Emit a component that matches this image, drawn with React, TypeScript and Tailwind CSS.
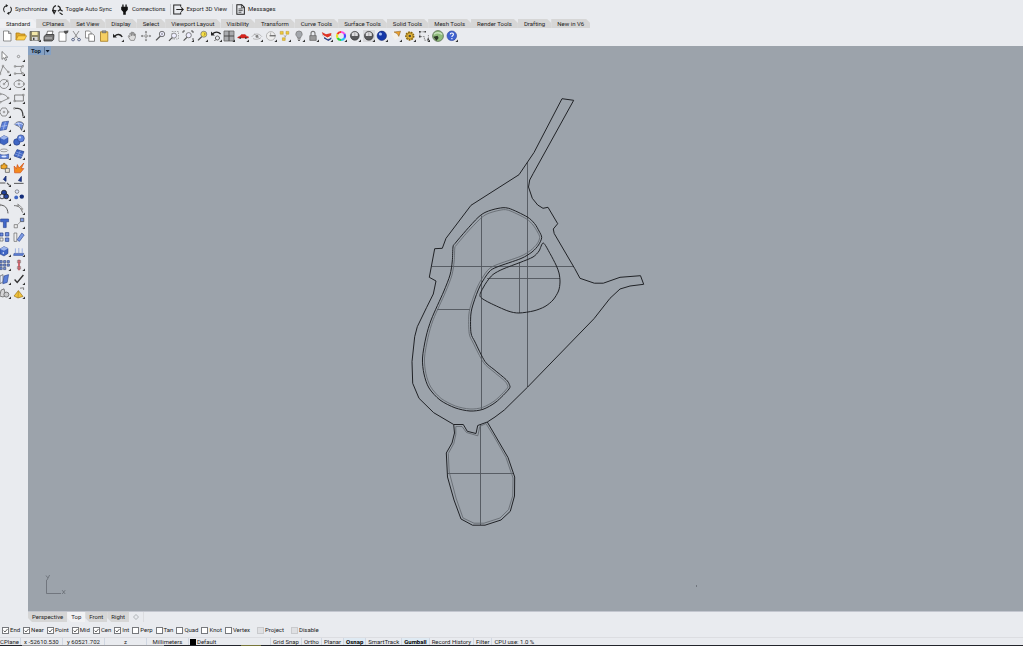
import { useState } from "react";
import type { ReactNode } from "react";

type IconDef = { name: string; art: ReactNode; more?: boolean };

const K = "#222222";
const G = "#8a8d92";
const B = "#3f66c4";
const L = "#9db4ea";

function Icon({ art, more, className = "size-3" }: { art: ReactNode; more?: boolean; className?: string }) {
  return (
    <svg viewBox="0 0 12 12" className={className} fill="none" stroke={K} strokeWidth={0.8} aria-hidden="true">
      {art}
      {more && <path d="M12 9.4V12H9.4Z" fill="#333" stroke="none" />}
    </svg>
  );
}

const lens = <path d="M7.2 5.2 2 10.4" strokeWidth={1.3} stroke="#555" />;

const toolbar: IconDef[] = [
  { name: "New", art: <path d="M2.5 1H7.5L10 3.5V11H2.5ZM7.5 1V3.5H10" fill="#fff" stroke="#666" strokeWidth={0.7} /> },
  { name: "Open", art: <><path d="M1 10V3H4.5L5.5 4H10V6" fill="#e0a92c" stroke="#b07c14" /><path d="M1 10 3.2 5.8H11.6L9.4 10Z" fill="#ffd24d" stroke="#b07c14" strokeWidth={0.6} /></> },
  { name: "Save", more: true, art: <><path d="M1 1.5H10.5V10.5H1Z" fill="#8d8768" stroke="#555" strokeWidth={0.7} /><path d="M3 1.8H8.6V5H3Z" fill="#f2e7a8" stroke="none" /><path d="M3 7H8.6V10.4H3Z" fill="#d8d8d8" stroke="none" /><path d="M4 7.8H5.5V10H4Z" fill="#444" stroke="none" /></> },
  { name: "Print", art: <><path d="M3.5 5 4.5 1.2H10L9 5Z" fill="#fff" stroke="#444" strokeWidth={0.7} /><path d="M1 6.5 3 4.6H11L10.6 9.6 9 11H1Z" fill="#777" stroke="#222" strokeWidth={0.7} /><path d="M1.8 8H9" stroke="#ddd" /></> },
  { name: "Document properties", art: <><path d="M2 2H9V11.3H2Z" fill="#fff" stroke="#666" strokeWidth={0.7} /><path d="M7 1.2 11.2.8 10.4 3 8 3.4Z" fill="#555" stroke="#333" strokeWidth={0.5} /></> },
  { name: "Cut", art: <><path d="M3 1 8 8.5M9 1 4 8.5" stroke="#777" /><path d="M3 8.3a1.3 1.3 0 1 0 .1 0ZM9 8.3a1.3 1.3 0 1 0 .1 0Z" stroke="#3c4a70" strokeWidth={0.9} /></> },
  { name: "Copy", art: <><path d="M1.5 1H5.5L7 2.5V8H1.5Z" fill="#fff" stroke="#666" strokeWidth={0.7} /><path d="M4.8 4H8.8L10.5 5.7V11.3H4.8Z" fill="#fff" stroke="#555" strokeWidth={0.7} /></> },
  { name: "Paste", art: <><path d="M2.5 1.8H9.8V11.3H2.5Z" fill="#f6cf62" stroke="#a47a20" strokeWidth={0.8} /><path d="M4.2.8H8V2.8H4.2Z" fill="#999" stroke="#555" strokeWidth={0.5} /></> },
  { name: "Undo", more: true, art: <><path d="M3 6C5 3.8 8.5 4 10.2 7" strokeWidth={1.4} /><path d="M1 3.8V7.6H4.9Z" fill={K} stroke="none" /></> },
  { name: "Pan", art: <path d="M3.8 6.8 2.6 5.6 2.3 6.8 4.6 10.4H8.2L9.4 7.5V4L8.5 3.8V5.8L7.9 2.5H7.1V5.6L6.4 2H5.5V5.8L4.7 3 3.9 3.2Z" fill="#ddd" stroke="#777" strokeWidth={0.7} /> },
  { name: "Rotate view", art: <><path d="M6 1.4V10.6M1.4 6H10.6" stroke="#999" strokeDasharray="3 1.2" /><path d="M6 .8 7.2 2.6H4.8ZM6 11.2 7.2 9.4H4.8ZM.8 6 2.6 4.8V7.2ZM11.2 6 9.4 4.8V7.2Z" fill="#666" stroke="none" /><path d="M4.6 6a1.4 1.4 0 1 0 2.8 0 1.4 1.4 0 1 0-2.8 0" stroke="#888" strokeWidth={0.6} /></> },
  { name: "Zoom dynamic", art: <>{lens}<circle cx="8" cy="4" r="2.7" fill="#eef" stroke="#555" /><path d="M8 2.8V5.2" strokeWidth={0.6} /></> },
  { name: "Zoom window", art: <><path d="M4 1.5H10.5V9H4Z" stroke="#999" strokeDasharray="1.5 1" /><path d="M4.6 7.2 1 10.8" stroke="#555" strokeWidth={1.2} /><circle cx="6" cy="5.6" r="2.5" fill="#eef" stroke="#777" /></> },
  { name: "Zoom extents", more: true, art: <><path d="M5.4 6.8 1.6 10.6" stroke="#555" strokeWidth={1.2} /><circle cx="6.7" cy="5.2" r="2.6" fill="#eef" stroke="#666" /><path d="M1 3V1H3M9 1H11V3M11 8V10" stroke="#333" /></> },
  { name: "Zoom selected", more: true, art: <>{lens}<circle cx="7.8" cy="4.2" r="3" fill="#f5df48" stroke="#777" /><path d="M8 2.6 9.2 4 8 5.6" stroke="#9a7b10" /></> },
  { name: "Undo view", more: true, art: <><path d="M2.4 4C4.8 1.4 8.4 1.6 10.6 4" strokeWidth={1.2} /><path d="M1 1.6V5.6H4.8Z" fill={K} stroke="none" /><path d="M7.4 6a2 2 0 1 0 .1 0M6 9.4 4.4 11" stroke="#555" strokeWidth={1} /></> },
  { name: "Four viewports", more: true, art: <><path d="M1 1H11V11H1Z" fill="#a9abae" stroke="#666" /><path d="M6 1V11M1 6H11" stroke="#444" strokeWidth={0.9} /></> },
  { name: "Set view", more: true, art: <><path d="M.8 7.2 3.2 6 4.4 4.6H8.2L9.6 6.2 11.4 6.7V8H.8Z" fill="#d8231c" stroke="#b01c16" strokeWidth={0.4} /><path d="M2.4 8h1.6M8 8h1.6" stroke="#333" strokeWidth={1.3} /></> },
  { name: "Named views", more: true, art: <><path d="M.8 6.8C3.2 3.2 8.2 3 11 6.8M2 8.6C4.4 9.8 8 9.4 10 7.6" stroke="#aaa" /><circle cx="6" cy="6.4" r="1.4" fill="#777" stroke="none" /><path d="M3 3.6 9 9" stroke="#999" strokeWidth={0.6} /></> },
  { name: "Set CPlane", more: true, art: <><circle cx="5.8" cy="6" r="4.4" fill="#eee" stroke="#aaa" /><path d="M4.6 5.8H10.6" stroke="#444" strokeWidth={1} /><path d="M5.6 2.6V5" stroke="#aaa" /></> },
  { name: "Object snap", more: true, art: <><path d="M1.2 1.4H4.2V4.2H1.2ZM7 1.4H9.8V4.2H7ZM3.4 7.8H6.2V10.4H3.4Z" fill="#edc93c" stroke="#bb9320" strokeWidth={0.5} /><path d="M4.6 5 7 7.4M7.4 5 5.8 7" stroke="#888" strokeWidth={0.6} /></> },
  { name: "Lights", more: true, art: <><path d="M2.8 4.2a3.2 3.2 0 1 1 6.4 0C9.2 6 7.6 6.4 7.5 8H4.6C4.5 6.4 2.8 6 2.8 4.2Z" fill="#a3a7ac" stroke="#777" strokeWidth={0.7} /><path d="M4.6 9H7.5M5 10.5H7" stroke="#444" /></> },
  { name: "Lock", more: true, art: <><path d="M4 6V3.4a2 2 0 0 1 4 0V6" stroke="#777" strokeWidth={1.1} /><path d="M2.8 5.6H9.2V10.4H2.8Z" fill="#999" stroke="#666" strokeWidth={0.7} /></> },
  { name: "Layers", more: true, art: <><path d="M3 8.6 7.4 11 10.4 9V7.4L7.4 9.2 3 7Z" fill="#2b3f86" stroke="none" /><path d="M1.6 5.6 6.8 9 10.6 6.8V5L6.8 7 1.6 3.6Z" fill="#fff" stroke="#999" strokeWidth={0.4} /><path d="M.8 2 5 4.2 10.4 3 10 5.6 6.6 7.4 2 5Z" fill="#de3527" stroke="none" /></> },
  { name: "Properties", more: true, art: <g strokeWidth={2.2}><path d="M6 2A4 4 0 0 1 9.5 4" stroke="#ff4be0" /><path d="M9.5 4A4 4 0 0 1 9.5 8" stroke="#4a4dff" /><path d="M9.5 8A4 4 0 0 1 6 10" stroke="#22c8f0" /><path d="M6 10A4 4 0 0 1 2.5 8" stroke="#27d83c" /><path d="M2.5 8A4 4 0 0 1 2.5 4" stroke="#e9e326" /><path d="M2.5 4A4 4 0 0 1 6 2" stroke="#f63a2b" /></g> },
  { name: "Shade", more: true, art: <><circle cx="5.8" cy="5.8" r="4.4" fill="#58595b" stroke="#333" strokeWidth={0.6} /><path d="M2.8 3.6C4.4 1.6 7.4 1.6 8.8 3.6V6H2.8Z" fill="#dedee0" stroke="none" /><path d="M5.8 1.6V6" stroke="#888" strokeWidth={0.6} /></> },
  { name: "Render preview", more: true, art: <><path d="M0 0H12V12H0Z" fill="#d8d9dc" stroke="none" /><circle cx="5.8" cy="5.8" r="4.4" fill="#58595b" stroke="#333" strokeWidth={0.6} /><path d="M2.8 3.6C4.4 1.6 7.4 1.6 8.8 3.6V6H2.8Z" fill="#dedee0" stroke="none" /><path d="M5.8 1.6V6" stroke="#888" strokeWidth={0.6} /></> },
  { name: "Render", more: true, art: <><circle cx="5.8" cy="5.8" r="4.7" fill="#1437a8" stroke="#0c1d60" strokeWidth={0.5} /><circle cx="4.4" cy="4" r="1.6" fill="#a9c1f5" stroke="none" /></> },
  { name: "Spotlight", more: true, art: <><path d="M1.4 4 5 .8 10 7 5 10Z" fill="#f4f1ea" stroke="none" /><path d="M4 2 10.6 1.2 8.8 6.4 7.4 3.8Z" fill="#eda02b" stroke="#845a1c" strokeWidth={0.5} /></> },
  { name: "Options", more: true, art: <><circle cx="5.8" cy="6" r="3.9" fill="#ebc74a" stroke="#886414" strokeWidth={1.6} strokeDasharray="1.7 1" /><circle cx="5.8" cy="6" r="3" fill="#e8b93b" stroke="#7b5a12" strokeWidth={0.5} /><circle cx="5.8" cy="6" r="1.3" fill="#4d4a41" stroke="none" /></> },
  { name: "Dimension", more: true, art: <><path d="M1.8 1.8V6.6H6.4V10.2H10.4V5M1.8 1.8H7" stroke="#777" strokeDasharray="1.8 .8" /><path d="M1 1H2.6V2.6H1ZM6.4 1H8V2.6H6.4ZM1 5.8H2.6V7.4H1ZM9.4 8.6H11V10.2H9.4Z" fill="#444" stroke="none" /></> },
  { name: "Grasshopper", art: <><circle cx="6" cy="6" r="5.4" fill="#8fbb7c" stroke="#5a6e52" strokeWidth={0.8} /><path d="M2 4.4C4 2 8 2.4 10.2 4.6" stroke="#c9e2be" strokeWidth={1.4} /><path d="M1.4 6.8 5.6 5.8 6.6 8 4.4 10.8Z" fill="#2b3627" stroke="none" /></> },
  { name: "Help", more: true, art: <><circle cx="5.8" cy="5.8" r="4.8" fill="#3f62d0" stroke="#2a3f94" strokeWidth={0.6} /><path d="M4.2 4.4C4.4 2.4 7.6 2.6 7.4 4.6 7.2 5.8 5.9 5.6 5.9 7M5.9 8V9.2" stroke="#fff" strokeWidth={1.1} /></> },
];

const pt = (x: number, y: number) => <path d={`M${x - 0.7} ${y - 0.7}h1.4v1.4h-1.4Z`} fill="#fff" stroke="#555" strokeWidth={0.5} />;
const cube = (x: number) => <><path d={`M${x} 4 ${x + 4} 1.6 ${x + 8} 3.4V8.4L${x + 4} 11 ${x} 9Z`} fill={B} stroke="#20387e" strokeWidth={0.5} /><path d={`M${x} 4 ${x + 4} 1.6 ${x + 8} 3.4 ${x + 4} 5.8Z`} fill={L} stroke="none" /></>;

const sidebar: IconDef[] = [
  { name: "Select", art: <path d="M3 1.5V9.4L5 7.6 6.4 10.6 7.6 10 6.3 7.2H8.8Z" fill="#fff" stroke="#555" strokeWidth={0.7} /> },
  { name: "Point", more: true, art: <circle cx="5.5" cy="6.5" r="1.2" stroke="#777" strokeWidth={0.7} /> },
  { name: "Polyline", more: true, art: <><path d="M1 10 4 2 9.6 8.4" stroke="#777" />{pt(4, 2)}{pt(9.4, 8)}{pt(1, 10)}</> },
  { name: "Curve", more: true, art: <><path d="M2 2.4H9.8C6.4 5 7.6 7.4 9.8 9.6H2" stroke="#777" />{pt(2, 2.4)}{pt(9.8, 2.2)}{pt(9.6, 9.4)}{pt(2, 9.6)}</> },
  { name: "Circle", more: true, art: <><circle cx="5" cy="6" r="4.5" stroke="#777" /><path d="M5 6 8 3" stroke="#777" />{pt(5, 6)}{pt(8.2, 2.8)}</> },
  { name: "Ellipse", more: true, art: <><ellipse cx="6" cy="6" rx="5" ry="3.6" stroke="#777" />{pt(6, 6)}{pt(6, 2.4)}{pt(11, 6)}</> },
  { name: "Arc", more: true, art: <><path d="M1 2C5 1.6 8 4 9.4 6.4L1 10.4" stroke="#777" />{pt(1.2, 2)}{pt(9.2, 6)}{pt(1.2, 10.2)}</> },
  { name: "Rectangle", more: true, art: <><path d="M1.6 3H10.4V9H1.6Z" stroke="#666" />{pt(1.6, 9)}{pt(10.4, 3)}</> },
  { name: "Polygon", more: true, art: <><path d="M3 2H7L9.4 6 7 10H3L.6 6Z" stroke="#777" />{pt(5, 6)}{pt(9.2, 6)}</> },
  { name: "Fillet curves", more: true, art: <><path d="M1.2 2.4H5C8.6 2.6 10 5 10 10.6" stroke="#444" strokeWidth={1.2} />{pt(1.4, 2.4)}</> },
  { name: "Surface", more: true, art: <><path d="M3.4 2 9.6 1.2 7.4 9.4 1 10.4Z" fill="#5b7fd8" stroke="#2a438c" strokeWidth={0.6} /><path d="M2.4 6.4 8.4 5.4M6.4 1.8 4.2 9.8" stroke="#c3d2f5" strokeWidth={0.6} /></> },
  { name: "Surface from edges", more: true, art: <><path d="M1.4 4.4C4 .6 9 1 10.6 4L8.6 10.4 6.6 6.8Z" fill="#6f8fe0" stroke="#444" strokeWidth={0.6} /><path d="M1.4 4.4C4 2.6 8 3 10 4.6M5 2.4 6.6 6.8" stroke="#dce5fb" /></> },
  { name: "Box", more: true, art: cube(1) },
  { name: "Boolean union", more: true, art: <><circle cx="3.8" cy="8" r="3.2" fill={B} stroke="#20387e" strokeWidth={0.6} /><circle cx="7.8" cy="4.4" r="3.5" fill="#5f84df" stroke="#20387e" strokeWidth={0.6} /><circle cx="7" cy="3.4" r="1.1" fill="#c6d5fa" stroke="none" /></> },
  { name: "Project curve", more: true, art: <><ellipse cx="5" cy="2.4" rx="3.8" ry="1.4" stroke="#888" /><path d="M.6 6C3 7.4 7 7.4 9.6 6V10.4H.6Z" fill="#5b7fd8" stroke="#2a438c" strokeWidth={0.6} /><ellipse cx="5" cy="8.4" rx="2.6" ry="1" fill="#dfe8ff" stroke="none" /></> },
  { name: "Mesh", more: true, art: <><path d="M4 1.6 11 3.6 8 10.4 1 8Z" fill={B} stroke="#223a80" strokeWidth={0.6} /><path d="M3 4 10 6.4M2 6 9 8.6M7.4 2.6 4.6 9.2" stroke="#9db4ea" strokeWidth={0.6} /></> },
  { name: "Join", art: <><path d="M2 3H4L4.4 1.4H6L6.2 3H8V6L6 7 2 6.4Z" fill="#f0a92d" stroke="#7c5410" strokeWidth={0.7} /><path d="M6.4 6.4H10.4V10.4H6.4Z" fill="#e9e2d2" stroke="#555" strokeWidth={0.7} /></> },
  { name: "Explode", art: <path d="M1.6 10.8 1.2 4 3.4 6.8 4.4 2.6 6 6 10.8 1 8.2 6.6 10.8 6.6 7.4 10.8Z" fill="#f28a1e" stroke="#d2501a" strokeWidth={0.7} /> },
  { name: "Trim", more: true, art: <><path d="M7 1V6.4L4.4 4.4Z" fill="#1a3a9a" stroke="#1a2b66" /><path d="M0 8H6.4M8 8 10.6 10.4" stroke="#555" strokeWidth={1.1} /></> },
  { name: "Split", art: <><path d="M8.4 1.4V6.6L5.4 5.6Z" fill="#1a3a9a" stroke="#1a2b66" strokeWidth={0.7} /><path d="M1 8.4H10.6" stroke="#666" strokeWidth={1.1} /></> },
  { name: "Group", more: true, art: <><circle cx="5" cy="3.8" r="2.6" fill="#1f4099" stroke="#222" /><circle cx="3" cy="7.4" r="2.4" fill="#dce4f8" stroke="#222" /><circle cx="7.2" cy="7.4" r="2.4" fill="#25439b" stroke="#222" /></> },
  { name: "Ungroup", art: <><circle cx="4" cy="2.6" r="1.8" fill="#dce4f8" stroke="#555" strokeWidth={0.6} /><circle cx="3.2" cy="8.4" r="1.9" fill={B} stroke="none" /><circle cx="8.8" cy="7.6" r="2.2" fill="#142d7a" stroke="none" /></> },
  { name: "Extend", art: <><path d="M.6 2C6 2 8.6 5 9 10.4" stroke="#555" strokeWidth={1} />{pt(1, 2)}</> },
  { name: "Offset", more: true, art: <><path d="M1 2.6C6 2.6 8 5 9.6 9.6" stroke="#555" /><path d="M4.6 1 8.8 4.4" stroke="#888" />{pt(5, 2.6)}{pt(9, 6)}</> },
  { name: "Text", art: <path d="M1.6 2H9.6V4.8H7.2V10.6H4.4V4.8H1.6Z" fill="#4269cb" stroke="#223b86" strokeWidth={0.6} /> },
  { name: "Move", more: true, art: <><path d="M3.4 8.8 9 3.2" stroke="#666" strokeDasharray="1.4 .8" /><path d="M1.2 7.6H4.4V10.8H1.2Z" fill="#eee" stroke="#555" strokeWidth={0.6} /><path d="M7.4 1.2H10.8V4.6H7.4Z" fill="#7d9be4" stroke="#333" strokeWidth={0.6} /></> },
  { name: "Copy objects", art: <><path d="M1 2H4V5H1ZM6.4 1.6H9.8V5H6.4ZM6.4 7H9.8V10.4H6.4Z" fill="#6f8fe0" stroke="#2a438c" strokeWidth={0.7} /><path d="M1 7H4V10H1Z" fill="#eee" stroke="#666" strokeWidth={0.7} /></> },
  { name: "Rotate", art: <><path d="M1 2H3.8V10.4H1Z" fill="#eee" stroke="#555" strokeWidth={0.6} /><path d="M4.2 8.8 8.8 2 11.2 4 6.4 10.4Z" fill="#7d9be4" stroke="#2a438c" strokeWidth={0.6} /></> },
  { name: "Solid cube", more: true, art: <>{cube(1)}<path d="M3 8 5 9V7Z" fill="#dfe8ff" stroke="none" /></> },
  { name: "Extrude", more: true, art: <><path d="M1 8.4H10.8L9.8 10.4H.6Z" fill="#5b7fd8" stroke="#2a438c" strokeWidth={0.5} /><path d="M2.4 8V3.4M5.8 8V3M9.2 8V3.4" stroke="#8aa2dd" /></> },
  { name: "Array", more: true, art: <path d="M1 1.6H3.2V3.8H1ZM4.6 1.6H6.8V3.8H4.6ZM8.2 1.6H10.4V3.8H8.2ZM1 5H3.2V7.2H1ZM4.6 5H6.8V7.2H4.6ZM8.2 5H10.4V7.2H8.2ZM1 8.4H3.2V10.6H1ZM4.6 8.4H6.8V10.6H4.6Z" fill="#6f8fe0" stroke="#333f66" strokeWidth={0.6} /> },
  { name: "Align", more: true, art: <><path d="M6 .8V11.2" stroke="#c9202a" strokeWidth={1.3} /><path d="M4.4 1.4H7.6V3.8H4.4ZM4.4 7.6H7.6V10H4.4Z" stroke="#8d6a6c" strokeWidth={0.7} /></> },
  { name: "Boundary", more: true, art: <><path d="M1 3 4 1.6V9L1 10.6Z" fill="#e5ebfa" stroke="#444" strokeWidth={0.6} /><path d="M5 3 9.6 1.6 8.2 9.4 3.8 10.8Z" fill="#5b7fd8" stroke="#2a438c" strokeWidth={0.6} /></> },
  { name: "Check", more: true, art: <path d="M1.6 6.6 4.2 9.4 10.4 2" stroke="#333" strokeWidth={1.4} /> },
  { name: "Hide", more: true, art: <><path d="M.8 9 2 3.2 5 1.8 6.6 8.4 4 10Z" fill="#d6d6d8" stroke="#555" strokeWidth={0.7} /><circle cx="7.4" cy="7.6" r="2.5" fill="#c9cacc" stroke="#555" strokeWidth={0.7} /></> },
  { name: "Pyramid", more: true, art: <><path d="M5.4 3.6 10 9.4 5 11 1 9Z" fill="#f1c33c" stroke="#8b6718" strokeWidth={0.6} /><path d="M5.4 3.6 5 11" stroke="#9b7420" strokeWidth={0.5} /><path d="M7 1.2 10.6.8V3" stroke="#666" /></> },
];

const syncArt = <g strokeWidth={1.1}><path d="M4.8 1.8A4.3 4.3 0 0 0 2.8 8.8M7.2 10.2A4.3 4.3 0 0 0 9.2 3.2" /><path d="M4.2 0 6.8 1.8 4.2 3.6ZM7.8 8.4 5.2 10.2 7.8 12Z" fill={K} stroke="none" /></g>;

const ribbon: IconDef[] = [
  { name: "Synchronize", art: syncArt },
  { name: "Toggle Auto Sync", art: <g strokeWidth={1.3}><path d="M4.4 1.8A4 4 0 0 0 2.2 8.4M6.2 2C8.4 2.8 9.4 4.6 9 6.6" /><path d="M.6 7 4 7.4 2.4 10.4ZM6.4 8 9 6 11.6 8M8.2 9.4 11.6 11.8" /></g> },
  { name: "Connections", art: <path d="M3.6.6H5V3H7V.6H8.4V3H9.6V6.4L7.4 8.6V11.8H4.6V8.6L2.4 6.4V3H3.6Z" fill="#111" stroke="none" /> },
  { name: "Export 3D View", art: <g strokeWidth={1.1}><path d="M8.4 3V1.2H.8V10.8H8.4V9M3.6 6H10.8M8.8 3.6 11.2 6 8.8 8.4" /></g> },
  { name: "Messages", art: <><path d="M2 .8H7.4L10.2 3.6V11.2H2Z" strokeWidth={1.1} /><path d="M7 .8V4H10.2M3.8 5.4H8.4M3.8 7.2H8.4M3.8 9H7" /></> },
];

const tabs = ["Standard", "CPlanes", "Set View", "Display", "Select", "Viewport Layout", "Visibility", "Transform", "Curve Tools", "Surface Tools", "Solid Tools", "Mesh Tools", "Render Tools", "Drafting", "New in V6"];

const snaps: [string, boolean][] = [["End", true], ["Near", true], ["Point", true], ["Mid", true], ["Cen", true], ["Int", true], ["Perp", false], ["Tan", false], ["Quad", false], ["Knot", false], ["Vertex", false]];

function Snap({ label, initial, muted }: { label: string; initial: boolean; muted?: boolean }) {
  const [on, setOn] = useState(initial);
  return (
    <label className={`flex items-center gap-px ${muted ? "pl-1" : ""}`}>
      <span className="grid size-[7px]">
        <input
          type="checkbox"
          checked={on}
          disabled={muted}
          onChange={() => setOn(!on)}
          className="col-start-1 row-start-1 size-[7px] appearance-none border border-[#77797d] bg-white disabled:border-[#c9cacd] disabled:bg-[#dfe0e3]"
        />
        {on && (
          <svg viewBox="0 0 7 7" className="pointer-events-none col-start-1 row-start-1 size-[7px]" fill="none" stroke="#222" strokeWidth={0.7} aria-hidden="true">
            <path d="M1.6 3.6 3 5 5.5 2" />
          </svg>
        )}
      </span>
      {label}
    </label>
  );
}

/* Closed Catmull-Rom spline through "x y x y ..." points. */
function spline(coords: string) {
  const n = coords.split(" ").map(Number);
  const p: [number, number][] = [];
  for (let i = 0; i < n.length; i += 2) p.push([n[i], n[i + 1]]);
  const at = (i: number) => p[(i + p.length) % p.length];
  let d = `M${p[0][0]} ${p[0][1]}`;
  for (let i = 0; i < p.length; i++) {
    const [a, b, c, e] = [at(i - 1), at(i), at(i + 1), at(i + 2)];
    d += `C${b[0] + (c[0] - a[0]) / 7} ${b[1] + (c[1] - a[1]) / 7} ${c[0] - (e[0] - b[0]) / 7} ${c[1] - (e[1] - b[1]) / 7} ${c[0]} ${c[1]}`;
  }
  return d + "Z";
}

const lakeOuter = spline("453 247 455 243.5 466 230.5 478 217.5 486 212 498 208.4 508.7 208.3 527 216.8 534.5 223.5 539 231 541.7 237.5 538.5 245 532 252 521 258.5 497 267 489 272 480 286 473.5 303 470.8 315 471 333 475 342 485 361.5 494 369.5 506 379.5 509.3 384.5 509 389 496 402 483 409.3 470 411 455 407.8 440 400 429 388 424 374 422.5 358 426 337 431.5 319 443.5 292 450 275 452.3 261");
const lakeInner = spline("454.8 248 456.5 245 467.5 232 479.5 219.5 487 214 499 210.4 508.3 210.2 526 218.6 533 225 537.5 232 539.7 237.5 537 244 530.5 250.5 520 256.5 496 265 487.5 270.5 478.3 285 471.8 302 468.8 315 469.2 333.5 473.2 343 483.5 362.5 493 371.2 504.5 380.7 507.3 385 507 388.5 495 400.5 482.5 407.4 470 409 455.5 406 441.2 398.5 430.8 387 425.9 373.5 424.5 358 428 337.5 433.3 319.5 445.2 292.8 451.8 275.5 454.2 261");
const island = spline("543.3 243 550 253.5 556 265 559 273 560 282 558.5 291 553 300 545 306.5 534 310.8 519 313 508 311 490 303 481.5 298 480 294.5 483 288 487 281.5 493 274.5 503 269 520 262.5 533 257 539 251");

function Drawing() {
  return (
    <svg viewBox="28 46 995 565" className="block size-full" fill="none" role="img" aria-label="Site plan, top view">
      <path d="M527.5 162V387M481.5 215.5V409M432 266.5H573M487 278.5H560M519.5 262V313M437 309.5H470M480.5 424.5V525M447.5 473.5H513" stroke="#50555b" strokeWidth={0.9} />
      <g stroke="#5f656b" strokeWidth={0.8} strokeLinejoin="round">
        <path d={lakeInner} />
        <path d="M455.8 426.5V434.5L453.8 443.5 448.3 453.5 449.2 472 456 498 463 518 474 523.2 484 523.2 500 518 508.5 509.7 512.7 496 513 478 506 457.5 494 436.5 486 423.5 479.8 426.5 477.8 435.8 466.5 432.5 462 426.5Z" />
      </g>
      <g stroke="#202226" strokeWidth={1} strokeLinejoin="round">
        <path d="M562 98.7 573.7 100.3 533.3 173.3 529.7 180 528.5 187 532.3 198.3 537.7 205 543 208.3 548 207.3 557.7 223.7 553.3 229 554.2 233.5 574.7 268.5 580 278.3 594.3 283.2 603.3 283.2 620 277.3 640.5 275.7 643.7 284.3 630 286 620 289 610 298.3 594 318.7 527.7 387 504.3 410 495 417 487.3 422 477.7 425.5 476 433.5 467.3 431.3 463.3 424.5H453.7L433.7 412.7 419 398.3 412.7 383.3 412 361.7 414.7 336.7 417.3 326.7 426.7 307.3 433.3 294 436 281 429.3 277.3 434.7 248.7 442.3 248.3 446 238.3 471 205.3 519 174.7 534 152.5Z" />
        <path d={lakeOuter} />
        <path d={island} />
        <path d="M453.7 424.5 454.5 433 452 443 446.3 453 447.5 477 454 500 461 519 472.5 525.2 485 525.2 501 520 510.3 511.3 514.5 496 514.7 477 508 457.5 487.3 422" />
      </g>
      <g stroke="#666b72" strokeWidth={0.8}>
        <path d="M46.5 580V593.5H61M46 575.5 47.7 577.8M49.6 575 47 580M62.2 590.2 65.2 594M65.2 590.2 62.2 594" />
        <path d="M696.5 585V587" />
      </g>
    </svg>
  );
}

const statusModes: [string, boolean][] = [["Grid Snap", false], ["Ortho", false], ["Planar", false], ["Osnap", true], ["SmartTrack", false], ["Gumball", true], ["Record History", false], ["Filter", false]];

export default function App() {
  const [tab, setTab] = useState("Standard");
  const [view, setView] = useState("Top");
  return (
    <div className="flex h-screen flex-col overflow-hidden bg-[#e9ebef] font-[Roboto,sans-serif] text-[6px] leading-[8px] whitespace-nowrap text-[#1c1c1c]">
      <header className="flex h-[18px] shrink-0 items-center pl-[2px]">
        {ribbon.map((r, i) => (
          <button
            key={r.name}
            className={`flex items-center gap-[2px] pr-[5px] ${i > 2 ? "border-l border-[#c6c8cc] pl-[2px]" : ""} ${i === 2 ? "pl-[2px]" : ""}`}
          >
            <Icon art={r.art} className="size-[11px]" />
            {r.name}
          </button>
        ))}
      </header>

      <nav className="flex h-[10px] shrink-0 items-end">
        {tabs.map((t) => (
          <button
            key={t}
            onClick={() => setTab(t)}
            className={`h-[9px] px-[6px] [clip-path:polygon(0_0,calc(100%-4px)_0,100%_4px,100%_100%,0_100%)] ${t === tab ? "bg-[#eff0f3]" : "bg-[#d6d6d6]"}`}
          >
            {t}
          </button>
        ))}
      </nav>

      <div className="grid h-[18px] w-[459px] shrink-0 grid-cols-33 items-start pt-[2px]">
        {toolbar.map((t) => (
          <button key={t.name} aria-label={t.name} className="flex justify-center">
            <Icon art={t.art} more={t.more} />
          </button>
        ))}
      </div>

      <main className="flex min-h-0 flex-1">
        <aside className="w-7 shrink-0 border-t border-[#d5dde8] pt-[2px]">
          <div className="-ml-[2px] grid h-[251px] w-7 grid-cols-2 grid-rows-18 items-center">
            {sidebar.map((t) => (
              <button key={t.name} aria-label={t.name} className="flex justify-center">
                <Icon art={t.art} more={t.more} />
              </button>
            ))}
          </div>
        </aside>
        <section className="relative min-w-0 flex-1 border-b border-[#c3c6cf] bg-[#9ca3ab]">
          <Drawing />
          <button className="absolute top-0 left-0 flex h-[9px] items-center gap-[3px] bg-[#86a1c3] pr-px pl-[3px] font-bold text-[#0d1a2c]">
            Top
            <svg viewBox="0 0 6 8" className="h-2 w-[6px]" aria-hidden="true">
              <path d="M.5 0V8" stroke="#3c5270" strokeWidth={0.6} />
              <path d="M1.6 3H5.6L3.6 5.6Z" fill="#0d1a2c" />
            </svg>
          </button>
        </section>
      </main>

      <nav className="flex h-[10px] shrink-0 items-start pl-7">
        {["Perspective", "Top", "Front", "Right"].map((v) => (
          <button
            key={v}
            onClick={() => setView(v)}
            className={`h-[10px] px-1 [clip-path:polygon(0_0,100%_0,100%_100%,4px_100%,0_6px)] ${v === view ? "bg-[#f1f2f4]" : "bg-[#d6d6d6]"}`}
          >
            {v}
          </button>
        ))}
        <button aria-label="New viewport" className="flex h-[10px] items-center border-r border-[#dcdde0] px-1">
          <svg viewBox="0 0 6 6" className="size-[6px]" fill="none" stroke={G} strokeWidth={0.6} aria-hidden="true">
            <path d="M3 .5 5.5 3 3 5.5.5 3Z" />
          </svg>
        </button>
      </nav>

      <div className="flex h-[15px] shrink-0 items-center gap-[3px] pt-px pl-[2px]">
        {snaps.map(([s, on]) => (
          <Snap key={s} label={s} initial={on} />
        ))}
        <Snap label="Project" initial={false} muted />
        <Snap label="Disable" initial={false} muted />
      </div>

      <footer className="flex h-[8px] shrink-0 items-center border-t border-[#dcdde1]">
        <span className="w-[21px] border-r border-[#d0d7e2]">CPlane</span>
        <span className="w-[42px] border-r border-[#d0d7e2] pl-[3px]">x -52610.530</span>
        <span className="w-[42px] border-r border-[#d0d7e2] pl-1">y 60521.702</span>
        <span className="w-[42px] border-r border-[#d0d7e2] text-center">z</span>
        <span className="w-[42px] border-r border-[#d0d7e2] text-center">Millimeters</span>
        <button className="flex w-[82px] items-center gap-px border-r border-[#d0d7e2] pl-px">
          <span className="size-[6px] bg-black" />
          Default
        </button>
        {statusModes.map(([m, on]) => (
          <button key={m} className={`border-r border-[#d0d7e2] px-[2px] ${on ? "bg-[#dfeaf3] font-bold text-black" : ""}`}>
            {m}
          </button>
        ))}
        <span className="pl-[2px]">CPU use: 1.0 %</span>
      </footer>
      <div className="flex h-px shrink-0 bg-[#23252b]">
        <span className="ml-[22px] w-[142px] bg-[#9b9ca0]" />
        <span className="ml-[77px] w-[20px] bg-[#77763a]" />
      </div>
    </div>
  );
}
